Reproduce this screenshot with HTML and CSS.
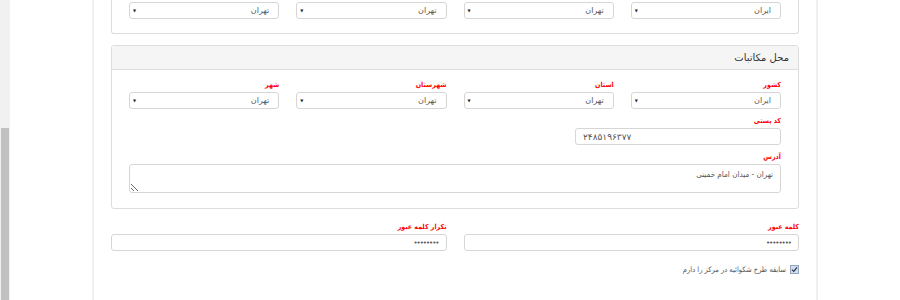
FILE: index.html
```html
<!DOCTYPE html>
<html lang="fa">
<head>
  <meta charset="UTF-8">
  <title>ثبت نام</title>
  <link rel="stylesheet" href="styles.css">
</head>
<body>
  <div class="page">
    <div class="scrollbar"><div class="scroll-thumb"></div></div>

    <div class="container" dir="rtl">
      <!-- address panel (scrolled, top part out of view) -->
      <div class="panel panel-cut">
        <div class="panel-body">
          <div class="row-4">
            <div class="field-group">
              <div class="select"><span>ایران</span><span class="caret">▼</span></div>
            </div>
            <div class="field-group">
              <div class="select"><span>تهران</span><span class="caret">▼</span></div>
            </div>
            <div class="field-group">
              <div class="select"><span>تهران</span><span class="caret">▼</span></div>
            </div>
            <div class="field-group">
              <div class="select"><span>تهران</span><span class="caret">▼</span></div>
            </div>
          </div>
        </div>
      </div>

      <div class="panel">
        <div class="panel-heading">محل مکاتبات</div>
        <div class="panel-body">
          <div class="row-4">
            <div class="field-group">
              <label>کشور</label>
              <div class="select"><span>ایران</span><span class="caret">▼</span></div>
            </div>
            <div class="field-group">
              <label>استان</label>
              <div class="select"><span>تهران</span><span class="caret">▼</span></div>
            </div>
            <div class="field-group">
              <label>شهرستان</label>
              <div class="select"><span>تهران</span><span class="caret">▼</span></div>
            </div>
            <div class="field-group">
              <label>شهر</label>
              <div class="select"><span>تهران</span><span class="caret">▼</span></div>
            </div>
          </div>

          <div class="row-3">
            <div class="field-group">
              <label>کد پستی</label>
              <input class="input input-ltr" type="text" value="۲۴۸۵۱۹۶۳۷۷">
            </div>
          </div>

          <div class="field-group">
            <label>آدرس</label>
            <textarea class="input textarea">تهران - میدان امام خمینی</textarea>
          </div>
        </div>
      </div>

      <div class="row-2">
        <div class="field-group">
          <label>کلمه عبور</label>
          <input class="input" type="password" value="12345678">
        </div>
        <div class="field-group">
          <label>تکرار کلمه عبور</label>
          <input class="input" type="password" value="12345678">
        </div>
      </div>

      <div class="check-row">
        <span class="checkbox">
          <svg width="7" height="7" viewBox="0 0 7 7"><path d="M1 3.6 L2.8 5.4 L6 1.4" fill="none" stroke="#2b3a4d" stroke-width="1.3"/></svg>
        </span>
        <span class="check-label">سابقه طرح شکوائیه در مرکز را دارم</span>
      </div>
    </div>
  </div>
</body>
</html>
```

FILE: styles.css
```css
* {
  margin: 0;
  padding: 0;
  box-sizing: border-box;
}

body {
  font-family: "DejaVu Sans", sans-serif;
  font-size: 10px;
  color: #555;
  background: #fff;
}

/* Page frame */
.page {
  display: flex;
  direction: ltr;
  height: 300px;
  overflow: hidden;
}

.scrollbar {
  display: flex;
  flex-direction: column;
  width: 10px;
  background: #f1f1f1;
}

.scroll-thumb {
  flex: 1;
  margin: 128px 1px 0 1px;
  background: #c1c1c1;
}

.container {
  width: 726px;
  margin-left: 82px;
  padding: 0 17px;
  border-left: 2px solid #f0f0f0;
  border-right: 2px solid #f0f0f0;
}

/* Panels */
.panel {
  border: 1px solid #ddd;
  border-radius: 3px;
  margin-bottom: 12px;
}

.panel-cut {
  border-top: none;
  border-radius: 0 0 3px 3px;
  margin-bottom: 11px;
}

.panel-cut .panel-body {
  padding-top: 2px;
  padding-bottom: 8px;
}

.panel-heading {
  height: 24px;
  line-height: 23px;
  padding: 0 9px;
  background: #f5f5f5;
  border-bottom: 1px solid #ddd;
  color: #333;
  font-size: 10px;
}

.panel-body {
  padding: 9px 17px 9px;
}

/* Grid rows */
.row-4 {
  display: grid;
  grid-template-columns: repeat(4, 1fr);
  column-gap: 17px;
}

.row-3 {
  display: grid;
  grid-template-columns: repeat(3, 1fr);
  column-gap: 17px;
}

.row-2 {
  display: grid;
  grid-template-columns: repeat(2, 1fr);
  column-gap: 17px;
}

/* Fields */
.field-group {
  margin-bottom: 6px;
}

.field-group label {
  display: block;
  height: 13px;
  line-height: 13px;
  color: #f00;
  font-family: "DejaVu Sans Condensed", "DejaVu Sans", sans-serif;
  font-weight: bold;
  font-size: 7px;
}

.select,
.input {
  display: flex;
  align-items: center;
  width: 100%;
  height: 17px;
  border: 1px solid #d6d6d6;
  border-radius: 3px;
  background: #fff;
  font-family: "DejaVu Sans", sans-serif;
  font-size: 8px;
  color: #555;
}

.select {
  justify-content: space-between;
  padding: 0 9px 0 3px;
}

.caret {
  font-size: 4px;
  color: #222;
}

.input {
  padding: 0 7px;
  outline: none;
}

.input-ltr {
  direction: ltr;
  text-align: left;
  font-size: 9px;
}

.textarea {
  display: block;
  height: 29px;
  padding: 4px 7px;
  resize: vertical;
  line-height: 12px;
  font-family: "DejaVu Sans Condensed", "DejaVu Sans", sans-serif;
}

input[type="password"] {
  font-size: 7px;
  letter-spacing: -1px;
}

/* Checkbox row */
.check-row {
  display: flex;
  align-items: center;
  gap: 4px;
  margin-top: 8px;
}

.checkbox {
  display: flex;
  align-items: center;
  justify-content: center;
  width: 9px;
  height: 9px;
  border: 1px solid #93a6c0;
  background: #d3dcea;
}

.check-label {
  font-family: "DejaVu Sans Condensed", "DejaVu Sans", sans-serif;
  font-size: 7.5px;
  color: #555;
}
```
